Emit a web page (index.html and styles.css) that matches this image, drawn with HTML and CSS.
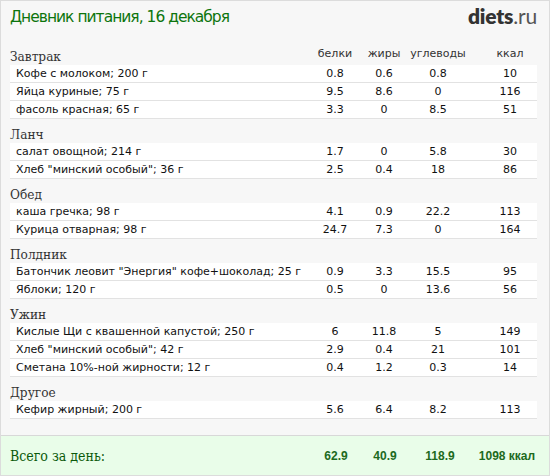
FILE: index.html
```html
<!DOCTYPE html>
<html lang="ru">
<head>
<meta charset="utf-8">
<title>Дневник питания</title>
<link rel="stylesheet" href="styles.css">
</head>
<body>
<div class="page">
  <header class="top">
    <h1 class="title">Дневник питания, 16 декабря</h1>
    <div class="logo"><b>diets</b>.ru</div>
  </header>

  <section class="meal">
    <div class="meal-head"><span class="meal-name">Завтрак</span><span class="col">белки</span><span class="col">жиры</span><span class="col">углеводы</span><span class="col kcal">ккал</span></div>
    <div class="row"><span class="name">Кофе с молоком; 200 г</span><span class="col">0.8</span><span class="col">0.6</span><span class="col">0.8</span><span class="col kcal">10</span></div>
    <div class="row"><span class="name">Яйца куриные; 75 г</span><span class="col">9.5</span><span class="col">8.6</span><span class="col">0</span><span class="col kcal">116</span></div>
    <div class="row"><span class="name">фасоль красная; 65 г</span><span class="col">3.3</span><span class="col">0</span><span class="col">8.5</span><span class="col kcal">51</span></div>
  </section>

  <section class="meal">
    <div class="meal-head"><span class="meal-name">Ланч</span></div>
    <div class="row"><span class="name">салат овощной; 214 г</span><span class="col">1.7</span><span class="col">0</span><span class="col">5.8</span><span class="col kcal">30</span></div>
    <div class="row"><span class="name">Хлеб "минский особый"; 36 г</span><span class="col">2.5</span><span class="col">0.4</span><span class="col">18</span><span class="col kcal">86</span></div>
  </section>

  <section class="meal">
    <div class="meal-head"><span class="meal-name">Обед</span></div>
    <div class="row"><span class="name">каша гречка; 98 г</span><span class="col">4.1</span><span class="col">0.9</span><span class="col">22.2</span><span class="col kcal">113</span></div>
    <div class="row"><span class="name">Курица отварная; 98 г</span><span class="col">24.7</span><span class="col">7.3</span><span class="col">0</span><span class="col kcal">164</span></div>
  </section>

  <section class="meal">
    <div class="meal-head"><span class="meal-name">Полдник</span></div>
    <div class="row"><span class="name">Батончик леовит "Энергия" кофе+шоколад; 25 г</span><span class="col">0.9</span><span class="col">3.3</span><span class="col">15.5</span><span class="col kcal">95</span></div>
    <div class="row"><span class="name">Яблоки; 120 г</span><span class="col">0.5</span><span class="col">0</span><span class="col">13.6</span><span class="col kcal">56</span></div>
  </section>

  <section class="meal">
    <div class="meal-head"><span class="meal-name">Ужин</span></div>
    <div class="row"><span class="name">Кислые Щи с квашенной капустой; 250 г</span><span class="col">6</span><span class="col">11.8</span><span class="col">5</span><span class="col kcal">149</span></div>
    <div class="row"><span class="name">Хлеб "минский особый"; 42 г</span><span class="col">2.9</span><span class="col">0.4</span><span class="col">21</span><span class="col kcal">101</span></div>
    <div class="row"><span class="name">Сметана 10%-ной жирности; 12 г</span><span class="col">0.4</span><span class="col">1.2</span><span class="col">0.3</span><span class="col kcal">14</span></div>
  </section>

  <section class="meal">
    <div class="meal-head"><span class="meal-name">Другое</span></div>
    <div class="row"><span class="name">Кефир жирный; 200 г</span><span class="col">5.6</span><span class="col">6.4</span><span class="col">8.2</span><span class="col kcal">113</span></div>
  </section>

  <footer class="total">
    <span class="total-label">Всего за день:</span><span class="col">62.9</span><span class="col">40.9</span><span class="col">118.9</span><span class="col kcal">1098 ккал</span>
  </footer>
</div>
</body>
</html>
```
FILE: styles.css
```css
html, body {
  margin: 0;
  padding: 0;
  background: #f7f7f7;
}
.page {
  box-sizing: border-box;
  width: 550px;
  height: 476px;
  border: 1px solid #dcdcdc;
  background: #f7f7f7;
  display: flex;
  flex-direction: column;
  font-family: "DejaVu Sans", Verdana, sans-serif;
  color: #222;
}
.top {
  height: 40px;
  flex: none;
  display: flex;
  justify-content: space-between;
  align-items: flex-start;
  padding: 0 12px 0 9px;
}
.title {
  margin: 6px 0 0 0;
  font-weight: normal;
  font-size: 15.5px;
  letter-spacing: -1px;
  line-height: 20px;
  color: #0d750d;
}
.logo {
  margin-top: 3px;
  font-family: Lato, "Open Sans", sans-serif;
  font-size: 21px;
  line-height: 24px;
  color: #555;
  letter-spacing: -0.2px;
}
.logo b {
  color: #333;
  font-weight: 800;
}
.meal {
  padding: 0 12px 0 9px;
}
.meal-head,
.row,
.total {
  display: grid;
  grid-template-columns: 300px 50px 48px 60px 1fr;
  align-items: center;
}
.meal-head {
  height: 24px;
  align-items: end;
  font-size: 11px;
  color: #333;
}
.meal-name {
  font-family: "DejaVu Serif", Georgia, serif;
  font-stretch: condensed;
  font-size: 13.5px;
  color: #333;
  line-height: 18px;
  padding-bottom: 0;
}
.meal-head .col {
  line-height: 18px;
  padding-bottom: 2px;
}
.row {
  height: 17px;
  background: #fff;
  border-bottom: 1px solid #e2e2e2;
  font-size: 11px;
  letter-spacing: 0;
  color: #111;
}
.name {
  padding-left: 6px;
  white-space: nowrap;
}
.col {
  text-align: center;
  white-space: nowrap;
}
.kcal {
  padding-left: 15px;
  text-align: center;
}
.total {
  margin-top: auto;
  height: 39px;
  border-top: 1px solid #d8d8d8;
  background: #e9fde9;
  padding: 0 12px 0 9px;
  grid-template-columns: 301px 50px 48px 62px 1fr;
}
.total-label {
  font-family: "DejaVu Serif", Georgia, serif;
  font-stretch: condensed;
  font-size: 14px;
  color: #0b5a0b;
}
.total .col {
  font-family: "Liberation Sans", Arial, sans-serif;
  font-weight: bold;
  font-size: 12px;
  color: #1d6a1d;
}
.total .kcal {
  padding-left: 6px;
}
```
